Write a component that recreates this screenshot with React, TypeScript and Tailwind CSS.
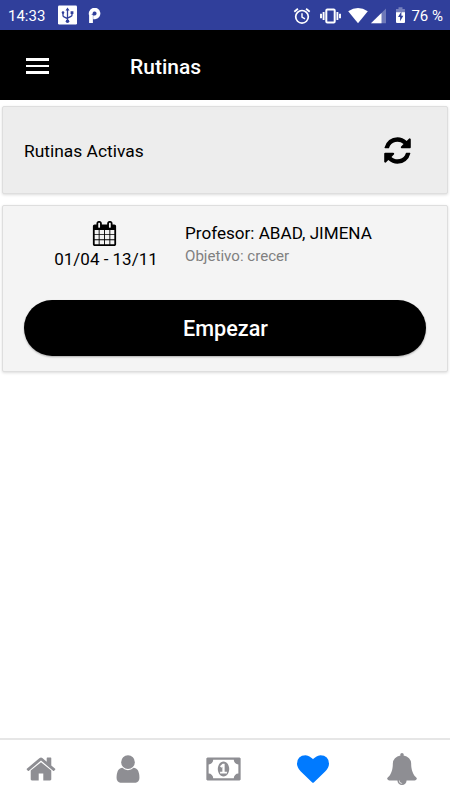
import type { ReactNode } from "react";

type GlyphProps = {
  path: string;
  className: string;
  viewBox?: string;
};

const paths = {
  calendar:
    "M192 1664h288v-288h-288v288zm352 0h320v-288h-320v288zm-352-352h288v-320h-288v320zm352 0h320v-320h-320v320zm-352-384h288v-288h-288v288zm736 736h320v-288h-320v288zm-384-736h320v-288h-320v288zm768 736h288v-288h-288v288zm-384-352h320v-320h-320v320zm-352-864v-288q0-13-9.5-22.5t-22.5-9.5h-64q-13 0-22.5 9.5t-9.5 22.5v288q0 13 9.5 22.5t22.5 9.5h64q13 0 22.5-9.5t9.5-22.5zm736 864h288v-320h-288v320zm-384-384h320v-288h-320v288zm384 0h288v-288h-288v288zm32-480v-288q0-13-9.5-22.5t-22.5-9.5h-64q-13 0-22.5 9.5t-9.5 22.5v288q0 13 9.5 22.5t22.5 9.5h64q13 0 22.5-9.5t9.5-22.5zm384-64v1280q0 52-38 90t-90 38h-1408q-52 0-90-38t-38-90v-1280q0-52 38-90t90-38h128v-96q0-66 47-113t113-47h64q66 0 113 47t47 113v96h384v-96q0-66 47-113t113-47h64q66 0 113 47t47 113v96h128q52 0 90 38t38 90z",
  refresh:
    "M1639 1056q0 5-1 7-64 268-268 434.5t-478 166.5q-146 0-282.5-55t-243.5-157l-129 129q-19 19-45 19t-45-19-19-45v-448q0-26 19-45t45-19h448q26 0 45 19t19 45-19 45l-137 137q71 66 161 102t187 36q134 0 250-65t186-179q11-17 53-117 8-23 30-23h192q13 0 22.5 9.5t9.5 22.5zm25-800v448q0 26-19 45t-45 19h-448q-26 0-45-19t-19-45 19-45l138-138q-148-137-349-137-134 0-250 65t-186 179q-11 17-53 117-8 23-30 23h-199q-13 0-22.5-9.5t-9.5-22.5v-7q65-268 270-434.5t480-166.5q146 0 284 55.5t245 156.5l130-129q19-19 45-19t45 19 19 45z",
  home:
    "M1472 992v480q0 26-19 45t-45 19h-384v-384h-256v384h-384q-26 0-45-19t-19-45v-480q0-1 .5-3t.5-3l575-474 575 474q1 2 1 6zm223-69l-62 74q-8 9-21 11h-3q-13 0-21-7l-692-577-692 577q-12 8-24 7-13-2-21-11l-62-74q-8-10-7-23.5t11-21.5l719-599q32-26 76-26t76 26l244 204v-195q0-14 9-23t23-9h192q14 0 23 9t9 23v408l219 182q10 8 11 21.5t-7 23.5z",
  user:
    "M1536 1399q0 109-62.5 187t-150.5 78h-854q-88 0-150.5-78t-62.5-187q0-85 8.5-160.5t31.5-152 58.5-131 94-89 134.5-34.5q131 128 313 128t313-128q76 0 134.5 34.5t94 89 58.5 131 31.5 152 8.5 160.5zm-256-887q0 159-112.5 271.5t-271.5 112.5-271.5-112.5-112.5-271.5 112.5-271.5 271.5-112.5 271.5 112.5 112.5 271.5z",
  money:
    "M768 1152h384v-96h-128v-448h-114l-148 137 77 80q42-37 55-57h2v288h-128v96zm512-256q0 70-21 142t-59.5 134-101.5 101-138 39-138-39-101.5-101-59.5-134-21-142 21-142 59.5-134 101.5-101 138-39 138 39 101.5 101 59.5 134 21 142zm512 256v-512q-106 0-181-75t-75-181h-1152q0 106-75 181t-181 75v512q106 0 181 75t75 181h1152q0-106 75-181t181-75zm128-832v1152q0 26-19 45t-45 19h-1792q-26 0-45-19t-19-45v-1152q0-26 19-45t45-19h1792q26 0 45 19t19 45z",
  heart:
    "M896 1664q-26 0-44-18l-624-602q-10-8-27.5-26t-55.5-65.5-68-97.5-53.5-121-23.5-138q0-220 127-344t351-124q62 0 126.5 21.5t120 58 95.5 68.5 76 68q36-36 76-68t95.5-68.5 120-58 126.5-21.5q224 0 351 124t127 344q0 221-229 450l-623 600q-18 18-44 18z",
  bell:
    "M912 1696q0-16-16-16-59 0-101.5-42.5t-42.5-101.5q0-16-16-16t-16 16q0 73 51.5 124.5t124.5 51.5q16 0 16-16zm816-288q0 52-38 90t-90 38h-448q0 106-75 181t-181 75-181-75-75-181h-448q-52 0-90-38t-38-90q50-42 91-88t85-119.5 74.5-158.5 50-206 19.5-260q0-152 117-282.5t307-158.5q-8-19-8-39 0-40 28-68t68-28 68 28 28 68q0 20-8 39 190 28 307 158.5t117 282.5q0 139 19.5 260t50 206 74.5 158.5 85 119.5 91 88z",
};

const tabs = [
  { name: "Inicio", path: paths.home, column: "w-[82px]" },
  { name: "Perfil", path: paths.user, column: "w-[91px]" },
  { name: "Pagos", path: paths.money, column: "w-[101px]", wide: true },
  { name: "Favoritos", path: paths.heart, column: "w-[77px]", active: true },
  { name: "Avisos", path: paths.bell, column: "w-[102px]" },
];

function Glyph({ path, className, viewBox = "0 0 1792 1792" }: GlyphProps) {
  return (
    <svg viewBox={viewBox} className={className} fill="currentColor">
      <path d={path} />
    </svg>
  );
}

function StatusBar() {
  return (
    <div className="flex h-[30px] items-center bg-[#303f9b] pl-2 pr-2 text-[15px] leading-none text-white">
      <span className="w-[49px] pt-0.5">14:33</span>

      <svg className="h-5 w-5" viewBox="0 0 20 20" fill="none">
        <rect x="1" y="0.5" width="19" height="19" rx="1.2" fill="#fff" />
        <g stroke="#303f9b" strokeWidth="1.3">
          <path d="M10.5 4v12M6 8v2.4q0 1 1 1.5l3.5 1.8M15 8v2q0 1-1 1.4l-3.5 1.8" />
        </g>
        <path d="M10.5 2.4l2 3h-4zM13.6 6.2h2.8V9h-2.8z" fill="#303f9b" />
        <circle cx="6" cy="7.6" r="1.3" fill="#303f9b" />
        <circle cx="10.5" cy="16.2" r="1.8" fill="#303f9b" />
      </svg>

      <svg className="ml-[11px] mt-px h-4 w-[14px]" viewBox="0 0 14 16" fill="none">
        <path d="M3 15V7M3 7.1A3.9 3.9 0 1 1 6.9 9.4H5.2" stroke="#fff" strokeWidth="3.8" />
      </svg>

      {/* alarm, vibrate, wifi, signal, battery */}
      <div className="ml-auto flex items-center">
        <svg className="mt-px h-[18px] w-[18px]" viewBox="0 0 18 18" fill="none" stroke="#fff">
          <circle cx="9" cy="9.8" r="6.3" strokeWidth="1.7" />
          <path d="M9 6.2v4l3 1.7" strokeWidth="1.4" />
          <path d="M1.3 4.7l3.6-3M16.7 4.7l-3.6-3" strokeWidth="1.8" />
        </svg>
        <svg className="ml-[9px] mt-px h-[18px] w-[21px]" viewBox="0 0 21 18" fill="none" stroke="#fff">
          <rect x="6.3" y="2.5" width="8.4" height="13" rx="1" strokeWidth="2" />
          <path d="M3.6 5v8M1 6.8v4.4M17.4 5v8M20 6.8v4.4" strokeWidth="1.9" />
        </svg>
        <svg className="ml-[7px] mt-px h-[18px] w-5" viewBox="0 0 20 18">
          <path d="M0.2 4.2Q10-2.4 19.8 4.2L10 16.3z" fill="#fff" />
        </svg>
        <svg className="ml-[3px] mt-px h-[18px] w-[15px]" viewBox="0 0 15 18">
          <path d="M15 1.5v14.8H0z" fill="#fff" fillOpacity=".3" />
          <path d="M10.5 5.9v10.4H0z" fill="#fff" />
        </svg>
        <svg className="ml-[9px] h-[18px] w-[11px]" viewBox="0 0 11 18">
          <path d="M3.5 1.2h4v1.7h2.4v4H1v-4h2.5z" fill="#fff" fillOpacity=".35" />
          <path d="M1 6.2h9V16q0 1-1 1H2q-1 0-1-1z" fill="#fff" />
          <path d="M6.4 5.6L3 11h2.1v4.2l3.2-5.4H6.4z" fill="#303f9b" />
        </svg>
        <span className="-mr-px ml-[5px] pt-0.5">76 %</span>
      </div>
    </div>
  );
}

function Card({ className, children }: { className: string; children: ReactNode }) {
  return (
    <section
      className={`mx-[2px] rounded-[2px] border border-[#dedede] shadow-[0_1px_3px_rgba(0,0,0,0.14)] ${className}`}
    >
      {children}
    </section>
  );
}

function TabBar() {
  return (
    <nav className="flex h-[62px] border-t-2 border-[#e6e6e6] bg-white">
      {tabs.map((tab) => (
        <button
          key={tab.name}
          type="button"
          aria-label={tab.name}
          className={`flex shrink-0 justify-center pt-[13px] ${tab.column} ${
            tab.active ? "text-[#007aff]" : "text-[#8e8e93]"
          }`}
        >
          <Glyph
            path={tab.path}
            viewBox={tab.wide ? "0 0 1920 1792" : undefined}
            className={tab.wide ? "h-8 w-[35px]" : "h-8 w-8"}
          />
        </button>
      ))}
    </nav>
  );
}

export default function App() {
  return (
    <div className="flex h-[800px] w-[450px] flex-col overflow-hidden bg-white font-[Roboto,sans-serif] text-black">
      <StatusBar />

      <header className="flex h-[70px] items-center bg-black pl-[26px] text-white">
        <button type="button" aria-label="Menú" className="flex w-[104px] flex-col gap-1 pt-0.5">
          <span className="h-[2.5px] w-[23px] bg-white" />
          <span className="h-[2.5px] w-[23px] bg-white" />
          <span className="h-[2.5px] w-[23px] bg-white" />
        </button>
        <h1 className="pt-1 text-[21px] font-medium leading-7">Rutinas</h1>
      </header>

      <main className="flex-1 pt-[6px]">
        <Card className="flex h-[88px] items-center justify-between bg-[#ededed] pl-[21px] pr-[34px]">
          <h2 className="pt-0.5 text-[17.4px]">Rutinas Activas</h2>
          <button type="button" aria-label="Actualizar">
            <Glyph path={paths.refresh} className="h-[31px] w-[31px]" />
          </button>
        </Card>

        <Card className="mt-[11px] h-[167px] bg-[#f4f4f4] px-[21px] pt-[15px]">
          <div className="flex h-[79px]">
            <div className="flex w-[161px] flex-col items-center">
              <Glyph path={paths.calendar} className="h-[25px] w-[25px]" />
              <p className="ml-[3px] mt-px text-[17px] leading-6">01/04 - 13/11</p>
            </div>
            <div>
              <p className="text-[17.1px] leading-6">Profesor: ABAD, JIMENA</p>
              <p className="mt-px text-[15.1px] leading-5 text-[#808080]">Objetivo: crecer</p>
            </div>
          </div>
          <button
            type="button"
            className="h-14 w-full rounded-full bg-black pl-px pt-[3px] text-[21.6px] font-medium text-white shadow-[0_1px_2px_rgba(0,0,0,0.3)]"
          >
            Empezar
          </button>
        </Card>
      </main>

      <TabBar />
    </div>
  );
}
